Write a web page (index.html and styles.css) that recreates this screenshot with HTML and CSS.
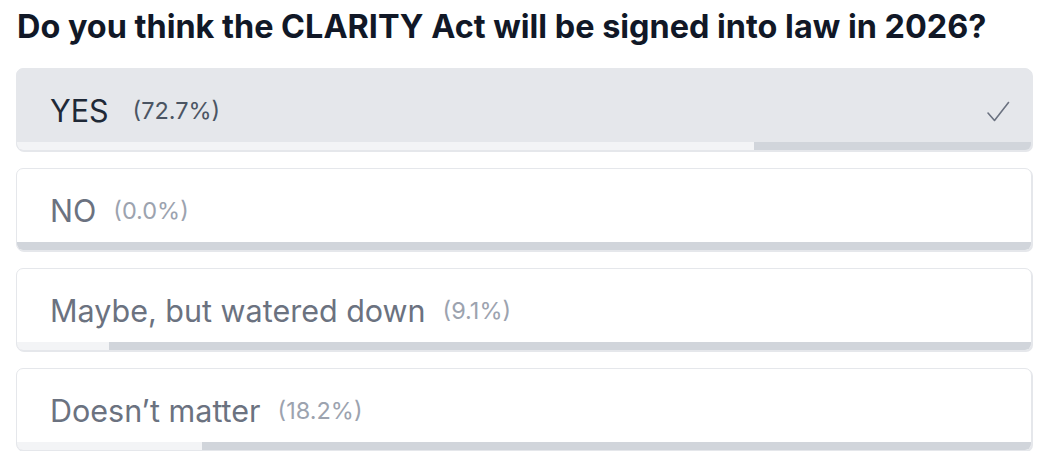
FILE: index.html
```html
<!DOCTYPE html>
<html>
<head>
<meta charset="utf-8">
<link rel="stylesheet" href="styles.css">
</head>
<body>
<div class="poll">
  <h1 class="question">Do you think the CLARITY Act will be signed into law in 2026?</h1>
  <div class="options">
    <div class="option selected">
      <div class="row">
        <span class="label">YES</span><span class="pct pct-wide">(72.7%)</span>
        <svg class="check" width="24" height="24" viewBox="0 0 24 24"><path d="M2 13 L8.5 20.5 L22.5 2.5" fill="none" stroke="#6b7280" stroke-width="1.6" stroke-linecap="round" stroke-linejoin="round"/></svg>
      </div>
      <div class="bar"><div class="fill" style="width:72.7%"></div></div>
    </div>
    <div class="option">
      <div class="row">
        <span class="label">NO</span><span class="pct">(0.0%)</span>
      </div>
      <div class="bar"><div class="fill" style="width:0%"></div></div>
    </div>
    <div class="option">
      <div class="row">
        <span class="label">Maybe, but watered down</span><span class="pct">(9.1%)</span>
      </div>
      <div class="bar"><div class="fill" style="width:9.1%"></div></div>
    </div>
    <div class="option">
      <div class="row">
        <span class="label">Doesn’t matter</span><span class="pct">(18.2%)</span>
      </div>
      <div class="bar"><div class="fill" style="width:18.2%"></div></div>
    </div>
  </div>
</div>
</body>
</html>
```
FILE: styles.css
```css
* { box-sizing: border-box; }
html, body { margin: 0; padding: 0; background: #ffffff; }
body { font-family: Inter, "Noto Sans", sans-serif; }
.poll { padding: 9px 14px 0 16px; }
.question {
  margin: 0 0 0 1px;
  font-size: 32.4px;
  line-height: 36px;
  font-weight: 700;
  color: #111827;
}
.options {
  margin-top: 23px;
  display: flex;
  flex-direction: column;
  gap: 17px;
}
.option {
  height: 83px;
  border: 1px solid #e5e7eb;
  border-radius: 7px;
  box-shadow: 1px 1px 0 #e5e7eb;
  background: #ffffff;
  overflow: hidden;
  display: flex;
  flex-direction: column;
}
.option.selected { background: #e5e7eb; }
.row {
  flex: 1;
  display: flex;
  align-items: center;
  padding: 10px 21px 0 33px;
}
.label {
  font-size: 30.5px;
  color: #6b7280;
}
.selected .label { color: #1f2937; }
.pct {
  margin-left: 17px;
  font-size: 23.5px;
  color: #9ca3af;
}
.selected .pct { color: #4b5563; }
.pct-wide { margin-left: 24px; }
.check { margin-left: auto; margin-top: 2px; }
.bar {
  height: 8px;
  background: #d1d5db;
}
.fill {
  height: 100%;
  background: #f3f4f6;
}
```
